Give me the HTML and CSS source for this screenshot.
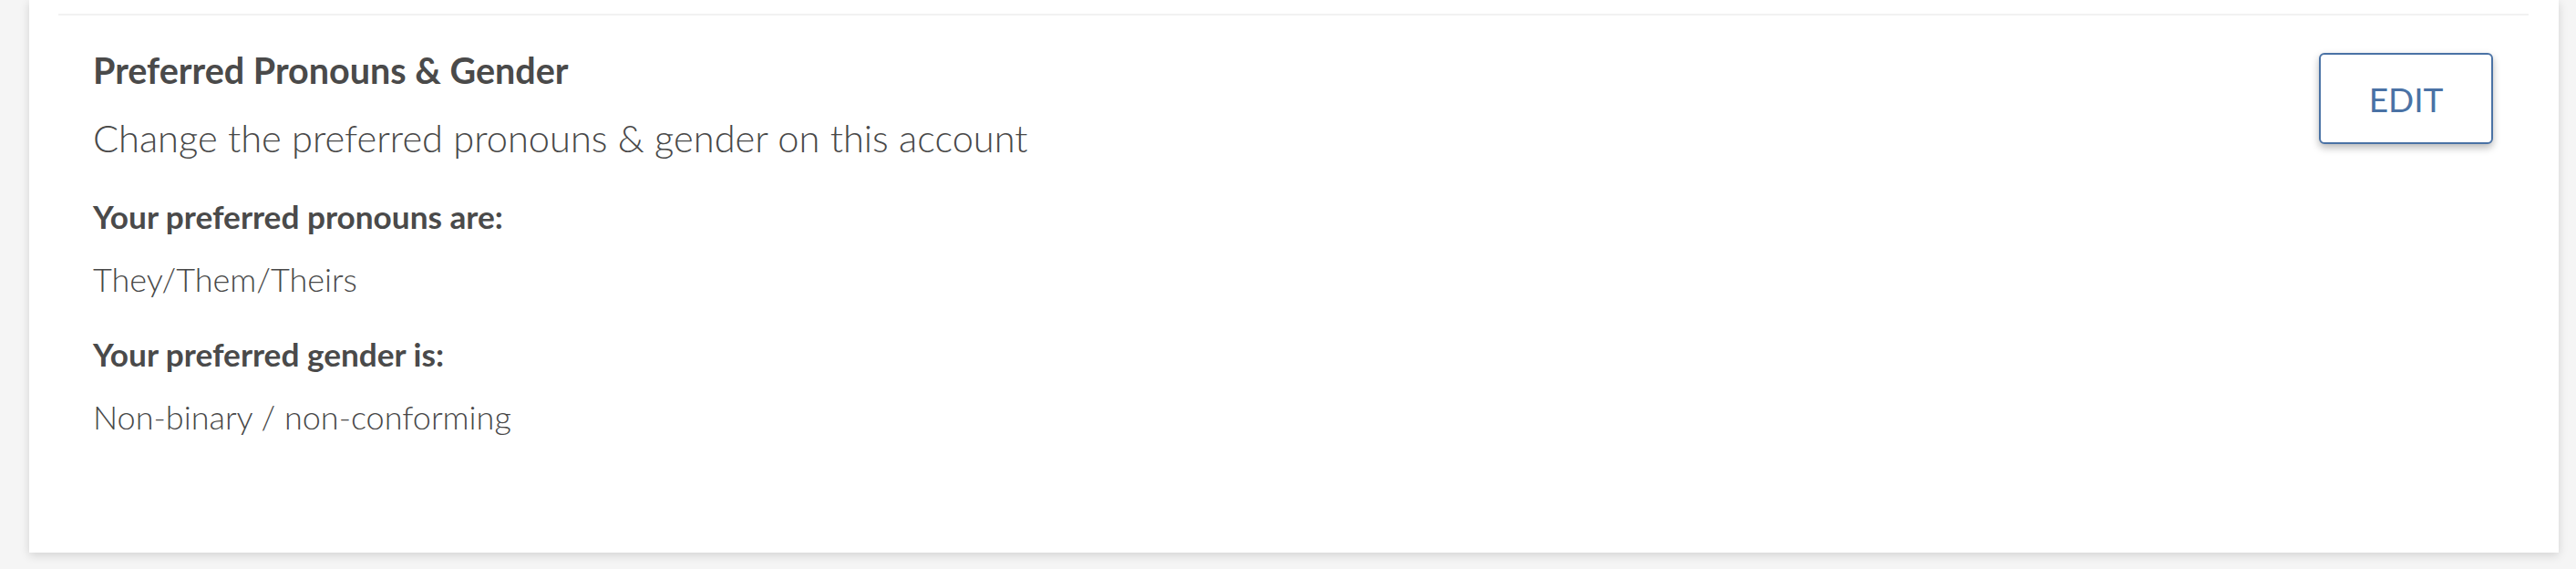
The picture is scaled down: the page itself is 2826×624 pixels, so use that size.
FILE: index.html
```html
<!DOCTYPE html>
<html lang="en">
<head>
    <meta charset="UTF-8">
    <meta name="viewport" content="width=device-width, initial-scale=1.0">
    <title>Account Settings</title>
    <link rel="stylesheet" href="styles.css">
</head>
<body>
    <main class="page">
        <div class="card">
            <section class="setting">
                <div class="setting-info">
                    <h2 class="setting-title">Preferred Pronouns &amp; Gender</h2>
                    <p class="setting-desc">Change the preferred pronouns &amp; gender on this account</p>

                    <h3 class="field-label">Your preferred pronouns are:</h3>
                    <p class="field-value">They/Them/Theirs</p>

                    <h3 class="field-label">Your preferred gender is:</h3>
                    <p class="field-value">Non-binary / non-conforming</p>
                </div>
                <button class="edit-btn">EDIT</button>
            </section>
        </div>
    </main>
</body>
</html>
```

FILE: styles.css
```css
body {
    font-family: Lato, "Open Sans", Arial, sans-serif;
    background-color: #f5f5f5;
    margin: 0;
    padding: 0;
    color: #484848;
}

.page {
    padding: 0 19px 15px 32px;
}

.card {
    background: #fff;
    box-shadow: 0 3px 10px rgba(0, 0, 0, 0.14);
    padding: 15px 33px 0 32px;
}

.setting {
    border-top: 2px solid #f2f2f2;
    display: flex;
    justify-content: space-between;
    align-items: flex-start;
    padding: 36px 39px 128px 38px;
}

.setting-info h2,
.setting-info h3,
.setting-info p {
    margin: 0;
}

.setting-title {
    font-size: 39.5px;
    line-height: 48px;
    font-weight: 700;
    color: #4a4a4a;
}

.setting-desc {
    font-size: 41.6px;
    line-height: 50px;
    font-weight: 300;
    margin-top: 25px !important;
}

.field-label {
    font-size: 35.2px;
    line-height: 40px;
    font-weight: 700;
    color: #4a4a4a;
    margin-top: 41px !important;
}

.field-value {
    font-size: 36px;
    line-height: 42px;
    font-weight: 300;
    margin-top: 28px !important;
}

.edit-btn {
    margin-top: 5px;
    width: 191px;
    height: 100px;
    background: #fff;
    color: #4a72a5;
    border: 2px solid #4a72a5;
    border-radius: 6px;
    box-shadow: 0 4px 8px rgba(0, 0, 0, 0.28);
    font-family: Lato, "Open Sans", Arial, sans-serif;
    font-size: 37px;
    font-weight: 400;
    cursor: pointer;
}

.edit-btn:hover {
    background-color: #f4f8fc;
}
```
